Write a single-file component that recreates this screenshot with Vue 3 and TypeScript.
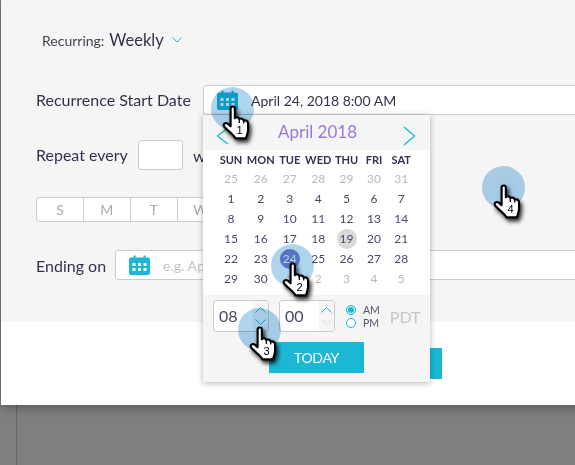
<script setup lang="ts">
const weekdays = ['SUN', 'MON', 'TUE', 'WED', 'THU', 'FRI', 'SAT'];
// the rest of the strip sits behind the open picker
const strip = ['S', 'M', 'T', 'W', '', '', ''];

type Day = { n: number; muted?: boolean; today?: boolean; selected?: boolean };
const days: Day[] = [
    ...[25, 26, 27, 28, 29, 30, 31].map((n) => ({ n, muted: true })),
    ...Array.from({ length: 30 }, (_, i) => ({
        n: i + 1,
        today: i + 1 === 19,
        selected: i + 1 === 24,
    })),
    ...[1, 2, 3, 4, 5].map((n) => ({ n, muted: true })),
];

const markers = [
    { n: 1, x: 232, y: 108 },
    { n: 2, x: 292, y: 265 },
    { n: 3, x: 259, y: 329 },
    { n: 4, x: 503, y: 187 },
];
</script>

<template>
    <div class="page">
        <div class="guide"></div>
        <div class="modal">
            <div class="form">
                <div class="recurring">
                    <span class="recurring-label">Recurring:</span>
                    <span class="recurring-value">Weekly</span>
                    <svg class="chevron" width="10" height="6" viewBox="0 0 10 6">
                        <path d="M.5.5 5 5 9.500.5" fill="none" stroke="#1ab8d4" />
                    </svg>
                </div>

                <div class="row start-row">
                    <label class="start-label">Recurrence Start Date</label>
                    <div class="field start-field">
                        <svg class="cal" width="21" height="20" viewBox="0 0 21 20">
                            <path fill="#1ab8d4" fill-rule="evenodd" d="M2 2.500h2.500V.5h2v2h8v-2h2v2H19a2 2 0 0 1 2 2V18a2 2 0 0 1-2 2H2a2 2 0 0 1-2-2V4.500a2 2 0 0 1 2-2zM3.500 8v3h3V8zm5.500 0v3h3V8zm5.500 0v3h3V8zM3.500 13v3h3v-3zm5.500 0v3h3v-3zm5.500 0v3h3v-3z" />
                        </svg>
                        <span class="start-value">April 24, 2018 8:00 AM</span>
                    </div>
                </div>

                <div class="row repeat-row">
                    <label class="repeat-label">Repeat every</label>
                    <div class="field repeat-field"></div>
                    <span class="unit">w</span>
                </div>

                <div class="strip">
                    <div v-for="(d, i) in strip" :key="i" class="strip-day">{{ d }}</div>
                </div>

                <div class="row ending-row">
                    <label>Ending on</label>
                    <div class="field ending-field">
                        <svg class="cal" width="21" height="20" viewBox="0 0 21 20">
                            <path fill="#1ab8d4" fill-rule="evenodd" d="M2 2.500h2.500V.5h2v2h8v-2h2v2H19a2 2 0 0 1 2 2V18a2 2 0 0 1-2 2H2a2 2 0 0 1-2-2V4.500a2 2 0 0 1 2-2zM3.500 8v3h3V8zm5.500 0v3h3V8zm5.500 0v3h3V8zM3.500 13v3h3v-3zm5.500 0v3h3v-3zm5.500 0v3h3v-3z" />
                        </svg>
                        <span class="placeholder">e.g. Apr</span>
                    </div>
                </div>
            </div>

            <div class="footer">
                <button class="save"></button>
            </div>

            <!-- Date picker -->
            <div class="picker">
                <div class="picker-head">
                    <svg width="13" height="18" viewBox="0 0 13 18">
                        <path d="M12 1 1.500 9 12 17" fill="none" stroke="#1ab8d4" stroke-width="1.300" />
                    </svg>
                    <span class="month">April 2018</span>
                    <svg width="13" height="20" viewBox="0 0 13 20">
                        <path d="M1 1l10.500 9L1 19" fill="none" stroke="#1ab8d4" stroke-width="1.300" />
                    </svg>
                </div>

                <div class="grid">
                    <div v-for="w in weekdays" :key="w" class="weekday">{{ w }}</div>
                    <div v-for="(d, i) in days" :key="i" class="day" :class="{ muted: d.muted }">
                        <span :class="{ today: d.today, selected: d.selected }">{{ d.n }}</span>
                    </div>
                </div>

                <div class="time">
                    <div class="time-top">
                        <div class="spin">
                            <span class="spin-value">08</span>
                            <div class="spin-btns">
                                <svg width="11" height="6" viewBox="0 0 11 6"><path d="M.5 5.500l5-5 5 5" fill="none" stroke="#1ab8d4" /></svg>
                                <svg width="11" height="6" viewBox="0 0 11 6"><path d="M.5.5l5 5 5-5" fill="none" stroke="#1ab8d4" /></svg>
                            </div>
                        </div>
                        <div class="spin">
                            <span class="spin-value">00</span>
                            <div class="spin-btns">
                                <svg width="11" height="6" viewBox="0 0 11 6"><path d="M.5 5.500l5-5 5 5" fill="none" stroke="#1ab8d4" /></svg>
                                <svg width="11" height="6" viewBox="0 0 11 6"><path d="M.5.5l5 5 5-5" fill="none" stroke="#ddd" /></svg>
                            </div>
                        </div>
                        <div class="ampm">
                            <div class="ampm-row"><span class="radio on"></span>AM</div>
                            <div class="ampm-row"><span class="radio"></span>PM</div>
                        </div>
                        <span class="zone">PDT</span>
                    </div>
                    <button class="today-btn">TODAY</button>
                </div>
            </div>
        </div>

        <!-- Tutorial click markers -->
        <div
            v-for="m in markers"
            :key="m.n"
            class="marker"
            :style="{ left: m.x + 'px', top: m.y + 'px' }"
        >
            <div class="halo"></div>
            <svg class="hand" width="31" height="36" viewBox="0 0 29 34">
                <path
                    d="M8 3.500C8 .8 12 .8 12 3.500V12.500C13.500 11 15.800 11.500 16.200 13.300 17.800 12.200 20 12.900 20.400 14.800 22 14 24.500 15 24.500 17.500V23C24.500 26 23.500 28 22.500 31.500H12.500C11 28 6 25 2 20.500 .4 18.300 3 16 5.300 17.600L8 20Z"
                    fill="#fff"
                    stroke="#000"
                    stroke-width="2"
                    stroke-linejoin="round"
                />
                <path d="M16.200 13.300V17M20.400 14.800V17.500" stroke="#000" stroke-width="1.200" fill="none" />
                <text x="16.500" y="27" text-anchor="middle" class="hand-num">{{ m.n }}</text>
            </svg>
        </div>
    </div>
</template>

<style>
html,
body {
    margin: 0;
    overflow: hidden;
}
</style>

<style scoped>
.page {
    position: relative;
    width: 575px;
    height: 465px;
    overflow: hidden;
    background: #7f7f7f;
    font-family: Lato, "Open Sans", sans-serif;
    color: #35314d;
}

.guide {
    position: absolute;
    left: 16px;
    top: 405px;
    bottom: 0;
    width: 1px;
    background: #666;
}

.modal {
    position: relative;
    margin-left: 1px;
    width: 640px;
    height: 405px;
    display: flex;
    flex-direction: column;
    background: #fff;
    box-shadow: 0 2px 10px rgba(0, 0, 0, 0.35);
}

.form {
    height: 322px;
    box-sizing: border-box;
    padding: 31px 0 0 35px;
    background: #f5f5f5;
}

.footer {
    flex: 1;
    padding: 26px 0 0 346px;
}

.save {
    display: block;
    width: 95px;
    height: 31px;
    border: 0;
    background: #1ab8d4;
}

.recurring {
    display: flex;
    align-items: center;
    height: 18px;
    padding-left: 6px;
}

.recurring-label {
    font-size: 14px;
    color: #44424f;
}

.recurring-value {
    margin-left: 5px;
    font-size: 16.500px;
}

.chevron {
    margin-left: 8px;
    margin-top: -1px;
}

.row {
    display: flex;
    align-items: center;
    font-size: 16px;
}

.start-row {
    margin-top: 36px;
}

.repeat-row {
    margin-top: 25px;
}

.ending-row {
    margin-top: 28px;
}

.start-label {
    width: 156px;
    margin-top: -2px;
}

.repeat-label {
    margin-top: -2px;
}

.field {
    box-sizing: border-box;
    height: 30px;
    background: #fff;
    border: 1px solid #ccc;
    border-radius: 3px;
    display: flex;
    align-items: center;
}

.start-field {
    margin-left: 11px;
    flex: 1;
}

.cal {
    margin-left: 13px;
    flex: none;
}

.start-value {
    margin-left: 13px;
    font-size: 14px;
}

.repeat-field {
    width: 45px;
    margin-left: 10px;
}

.unit {
    margin-left: 10px;
}

.strip {
    display: flex;
    width: 329px;
    height: 25px;
    margin-top: 27px;
    box-sizing: border-box;
    background: #fff;
    border: 1px solid #ccc;
    border-radius: 3px;
}

.strip-day {
    flex: 1;
    display: flex;
    align-items: center;
    justify-content: center;
    font-size: 14px;
    color: #a9a9a9;
    border-left: 1px solid #ccc;
}

.strip-day:first-child {
    border-left: 0;
}

.ending-field {
    margin-left: 9px;
    flex: 1;
}

.placeholder {
    margin-left: 13px;
    font-size: 14px;
    color: #c4c4c4;
}

.picker {
    position: absolute;
    left: 202px;
    top: 115px;
    width: 227px;
    height: 267px;
    display: flex;
    flex-direction: column;
    background: #fff;
    box-shadow: 0 1px 6px rgba(0, 0, 0, 0.3);
}

.picker-head {
    height: 35px;
    box-sizing: border-box;
    padding: 6px 14px 0 13px;
    display: flex;
    justify-content: space-between;
    align-items: center;
    background: #f5f5f5;
}

.month {
    font-size: 17px;
    color: #9a78d8;
    margin: -8px 0 0 3px;
}

.grid {
    height: 145px;
    padding-left: 13px;
    display: grid;
    grid-template-columns: 30px 29.5px 28.5px 28.5px 28px 27px 27.5px;
    grid-template-rows: 19px repeat(6, 20px);
}

.weekday {
    display: flex;
    align-items: center;
    justify-content: center;
    font-size: 11px;
    font-weight: 700;
    color: #35314d;
}

.day {
    display: flex;
    align-items: center;
    justify-content: center;
    font-size: 12px;
    color: #4b4864;
}

.day.muted {
    color: #b9b9b9;
}

.day span {
    width: 20px;
    height: 20px;
    line-height: 20px;
    text-align: center;
    border-radius: 50%;
}

.day .today {
    background: #d9d9d9;
}

.day .selected {
    background: #8088d4;
    color: #fff;
}

.time {
    flex: 1;
    background: #f5f5f5;
    padding: 5px 0 0 10px;
}

.time-top {
    display: flex;
    align-items: center;
    height: 32px;
}

.spin {
    box-sizing: border-box;
    width: 56px;
    height: 32px;
    display: flex;
    justify-content: space-between;
    background: #fff;
    border: 1px solid #ccc;
    border-radius: 3px;
    margin-right: 10px;
}

.spin-value {
    padding-left: 5px;
    font-size: 16px;
    line-height: 30px;
    color: #4b4864;
}

.spin-btns {
    width: 15px;
    display: flex;
    flex-direction: column;
    align-items: center;
    justify-content: space-around;
    padding: 3px 0;
    box-sizing: border-box;
    background: #f5f5f5;
}

.ampm {
    margin-left: 1px;
    display: flex;
    flex-direction: column;
    gap: 2px;
    font-size: 10.5px;
    color: #55526a;
}

.ampm-row {
    display: flex;
    align-items: center;
    height: 11px;
}

.radio {
    box-sizing: border-box;
    width: 10px;
    height: 10px;
    margin-right: 7px;
    border: 1px solid #1ab8d4;
    border-radius: 50%;
    background: #fff;
}

.radio.on {
    background: #1ab8d4;
    box-shadow: inset 0 0 0 1px #fff;
}

.zone {
    margin-left: 10px;
    font-size: 16px;
    color: #c6c6c6;
}

.today-btn {
    display: block;
    width: 95px;
    height: 31px;
    margin: 10px 0 0 56px;
    border: 0;
    padding: 0;
    background: #1ab8d4;
    color: #fff;
    font-family: inherit;
    font-size: 14px;
    letter-spacing: -0.3px;
}

.marker {
    position: absolute;
    width: 0;
    height: 0;
}

.halo {
    position: absolute;
    left: -21.500px;
    top: -21.500px;
    width: 43px;
    height: 43px;
    border-radius: 50%;
    background: #aed4ee;
    mix-blend-mode: multiply;
}

.hand {
    position: absolute;
    left: -9.700px;
    top: -3px;
    filter: drop-shadow(2px 3px 2px rgba(0, 0, 0, 0.85));
}

.hand-num {
    font-family: "Liberation Sans", sans-serif;
    font-size: 10.5px;
    fill: #000;
}
</style>
